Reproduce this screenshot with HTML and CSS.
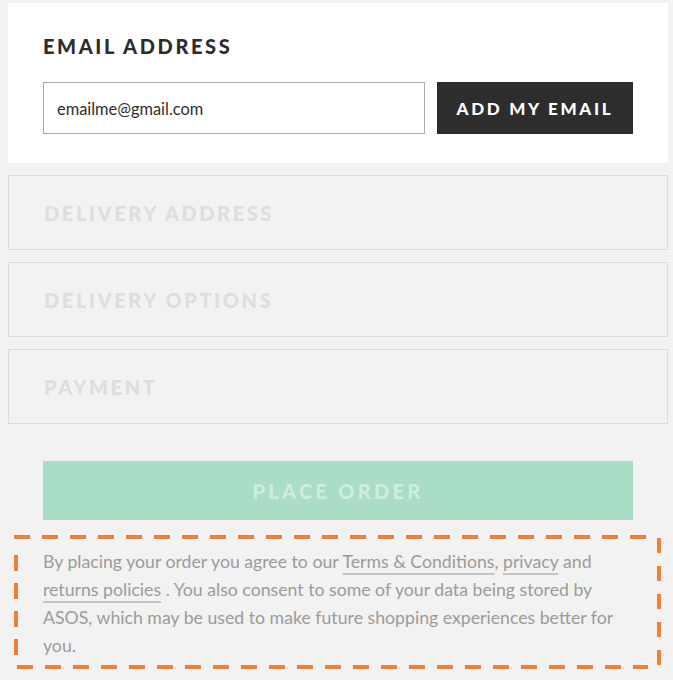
FILE: index.html
```html
<!DOCTYPE html>
<html lang="en">
<head>
<meta charset="utf-8">
<title>Checkout</title>
<link rel="stylesheet" href="styles.css">
</head>
<body>
<main class="checkout">
  <section class="card">
    <h2 class="card-title">EMAIL ADDRESS</h2>
    <form class="email-row">
      <input class="email-input" type="text" value="emailme@gmail.com">
      <button class="btn-dark" type="button">ADD MY EMAIL</button>
    </form>
  </section>
  <section class="step"><h2 class="step-title">DELIVERY ADDRESS</h2></section>
  <section class="step"><h2 class="step-title">DELIVERY OPTIONS</h2></section>
  <section class="step"><h2 class="step-title">PAYMENT</h2></section>
  <div class="order-wrap">
    <button class="btn-order" type="button">PLACE ORDER</button>
  </div>
  <div class="legal">
    <p class="legal-text">By placing your order you agree to our <a class="link" href="#">Terms &amp; Conditions</a>, <a class="link" href="#">privacy</a> and <a class="link" href="#">returns policies</a> . You also consent to some of your data being stored by ASOS, which may be used to make future shopping experiences better for you.</p>
  </div>
</main>
</body>
</html>
```
FILE: styles.css
```css
* { box-sizing: border-box; }
html, body { margin: 0; padding: 0; }
body {
  background: #f2f2f2;
  font-family: "Lato", "Noto Sans", sans-serif;
  width: 673px;
  height: 680px;
  overflow: hidden;
}
.checkout { padding-top: 3px; }
.card {
  background: #fff;
  margin: 0 5px 0 8px;
  padding: 31px 35px 29px 35px;
}
.card-title {
  margin: 0;
  font-size: 20px;
  line-height: 24px;
  font-weight: 900;
  letter-spacing: 2.6px;
  color: #2d2d2d;
}
.email-row {
  display: flex;
  gap: 12px;
  margin: 24px 0 0 0;
}
.email-input {
  flex: 1;
  height: 52px;
  border: 1px solid #a9a9a9;
  padding: 0 13px;
  font-family: inherit;
  font-size: 16.4px;
  color: #2d2d2d;
  background: #fff;
  outline: none;
}
.btn-dark {
  width: 196px;
  height: 52px;
  border: 0;
  background: #2d2d2d;
  color: #fff;
  font-family: inherit;
  font-weight: 900;
  font-size: 17px;
  letter-spacing: 2.7px;
  padding: 0;
}
.step {
  margin: 12px 5px 0 8px;
  height: 75px;
  border: 1px solid #dcdcdc;
  display: flex;
  align-items: center;
  padding-left: 35px;
}
.step-title {
  margin: 0;
  font-size: 20px;
  line-height: 24px;
  font-weight: 900;
  letter-spacing: 2.6px;
  color: #dedede;
}
.order-wrap { padding: 37px 40px 0 43px; }
.btn-order {
  display: block;
  width: 590px;
  height: 59px;
  border: 0;
  background: #a9ddc5;
  color: #cdeedd;
  font-family: inherit;
  font-weight: 900;
  font-size: 20px;
  letter-spacing: 3.3px;
  padding: 0;
}
.legal {
  margin: 15px 0 0 14px;
  width: 647px;
  height: 134px;
  padding: 13px 24px 0 29px;
  background:
    repeating-linear-gradient(90deg, #ef8035 0 16px, transparent 16px 28px) left top / 634px 4px no-repeat,
    repeating-linear-gradient(90deg, #ef8035 0 16px, transparent 16px 28px) 3px bottom / 631px 4px no-repeat,
    repeating-linear-gradient(180deg, #ef8035 0 16px, transparent 16px 28px) left 0 top 20px / 4px 110px no-repeat,
    repeating-linear-gradient(180deg, #ef8035 0 15px, transparent 15px 28px) right 0 top 3px / 4px 128px no-repeat;
}
.legal-text {
  margin: 0;
  font-size: 17.7px;
  line-height: 28px;
  color: #9b9b9b;
}
.link {
  color: #9b9b9b;
  text-decoration: underline;
  text-decoration-color: #c4c4c4;
  text-decoration-thickness: 2px;
  text-underline-offset: 5px;
}
```
